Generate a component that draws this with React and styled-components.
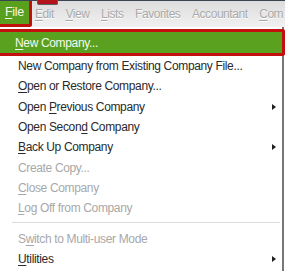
import React from "react";
import styled, { createGlobalStyle } from "styled-components";

const Global = createGlobalStyle`
  html, body { margin: 0; padding: 0; background: #fff; }
  body {
    font-family: "Liberation Sans", Arial, sans-serif;
  }
`;

const Screen = styled.div`
  position: relative;
  width: 285px;
  height: 271px;
  overflow: hidden;
  background: #fff;
`;

const MenuBar = styled.div`
  display: flex;
  align-items: stretch;
  height: 27px;
  border-top: 1px solid #3c4652;
  box-sizing: border-box;
  overflow: hidden;
  background: linear-gradient(to bottom, #dcdcdc, #f1f1f1);
`;

const FileTab = styled.div`
  display: flex;
  flex: none;
  align-items: center;
  width: 32px;
  box-sizing: border-box;
  padding-left: 5px;
  margin-top: -1px;
  background: #58a01e;
  border-right: 3px solid #c2100f;
  border-bottom: 3px solid #c2100f;
  border-bottom-right-radius: 3px;
  color: #f4f8ee;
  font-size: 12.5px;
  letter-spacing: -0.3px;
`;

const BarItems = styled.div`
  display: flex;
  align-items: center;
  gap: 11.6px;
  padding-left: 3px;
  white-space: nowrap;
`;

const BarItem = styled.span`
  font-size: 12px;
  letter-spacing: -0.45px;
  color: #a9a9a9;
  text-shadow: 0 1px 0 #ffffff;
`;

const Marker = styled.span`
  position: absolute;
  left: 37px;
  top: 0;
  width: 19px;
  height: 4px;
  background: #b3141a;
  border: 1px solid #5a5f66;
  border-top: none;
  border-radius: 0 0 2px 2px;
`;

const Key = styled.u`
  text-decoration-thickness: 1px;
  text-underline-offset: 1.5px;
`;

const Panel = styled.div`
  width: 284px;
  height: 244px;
  box-sizing: border-box;
  padding-top: 2px;
  border-right: 2px solid #777;
  background: #fff;
`;

const Highlight = styled.div`
  display: flex;
  align-items: center;
  height: 27px;
  box-sizing: border-box;
  margin-right: -3px;
  padding-left: 15px;
  background: #59a11f;
  border: 3px solid #c2100f;
  border-left: none;
  border-radius: 0 3px 3px 0;
  color: #f6f9f1;
  font-size: 12px;
  letter-spacing: -0.35px;
`;

const Row = styled.div`
  display: flex;
  align-items: center;
  height: 20.3px;
  padding: 0 6px 0 18px;
  font-size: 12px;
  letter-spacing: -0.35px;
  white-space: nowrap;
  color: ${(p) => (p.$disabled ? "#a8a8a8" : "#2a2a2a")};
`;

const Arrow = styled.span`
  margin-left: auto;
  width: 0;
  height: 0;
  border-top: 3.5px solid transparent;
  border-bottom: 3.5px solid transparent;
  border-left: 4px solid #1e1e1e;
`;

const Separator = styled.div`
  height: 1px;
  margin: 4px 2px 5px 12px;
  background: #dcdcdc;
`;

const rows = [
  { label: "New Company from Existing Company File..." },
  { label: ["", "O", "pen or Restore Company..."] },
  { label: ["Open ", "P", "revious Company"], sub: true },
  { label: ["Open Secon", "d", " Company"] },
  { label: ["", "B", "ack Up Company"], sub: true },
  { label: "Create Copy...", disabled: true },
  { label: ["", "C", "lose Company"], disabled: true },
  { label: ["", "L", "og Off from Company"], disabled: true },
];

const Label = ({ label }) =>
  Array.isArray(label) ? (
    <span>
      {label[0]}
      <Key>{label[1]}</Key>
      {label[2]}
    </span>
  ) : (
    <span>{label}</span>
  );

export default function App() {
  return (
    <Screen>
      <Global />
      <MenuBar>
        <FileTab>
          <span>
            <Key>F</Key>ile
          </span>
        </FileTab>
        <BarItems>
          <BarItem>
            <Key>E</Key>dit
          </BarItem>
          <BarItem>
            <Key>V</Key>iew
          </BarItem>
          <BarItem>
            <Key>L</Key>ists
          </BarItem>
          <BarItem>Favorites</BarItem>
          <BarItem>Accountant</BarItem>
          <BarItem>
            <Key>C</Key>om
          </BarItem>
        </BarItems>
      </MenuBar>
      <Marker />
      <Panel>
        <Highlight>
          <span>
            <Key>N</Key>ew Company...
          </span>
        </Highlight>
        {rows.map((r, i) => (
          <Row key={i} $disabled={r.disabled}>
            <Label label={r.label} />
            {r.sub && <Arrow />}
          </Row>
        ))}
        <Separator />
        <Row $disabled>
          <Label label={["S", "w", "itch to Multi-user Mode"]} />
        </Row>
        <Row>
          <Label label={["", "U", "tilities"]} />
          <Arrow />
        </Row>
      </Panel>
    </Screen>
  );
}
